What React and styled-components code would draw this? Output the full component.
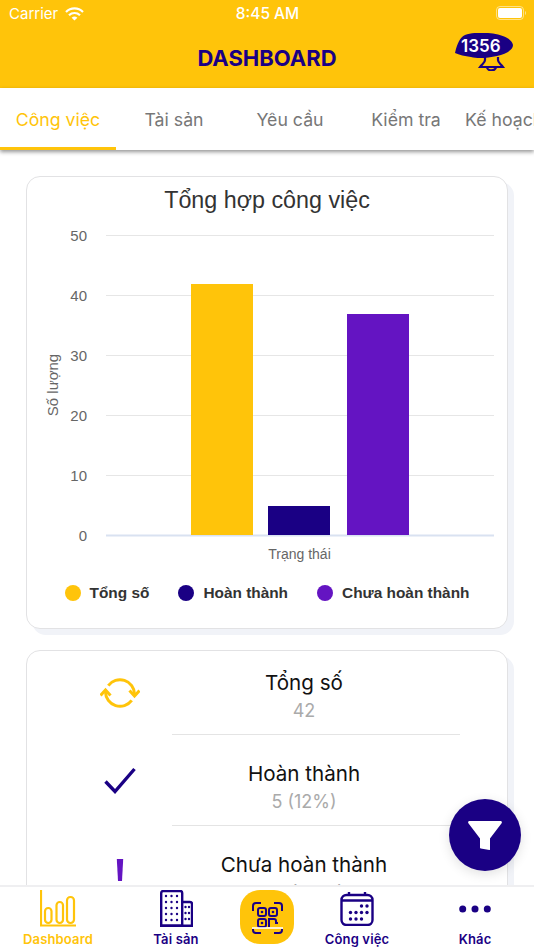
import styled, { createGlobalStyle } from "styled-components";

const YELLOW = "#ffc40a";
const NAVY = "#1a0084";
const PURPLE = "#6414c2";

const GlobalStyle = createGlobalStyle`
  * {
    box-sizing: border-box;
  }
  html, body {
    margin: 0;
    padding: 0;
    background: #fff;
    font-family: "Inter", "Liberation Sans", sans-serif;
  }
`;

const Screen = styled.div`
  position: relative;
  display: flex;
  flex-direction: column;
  width: 534px;
  height: 950px;
  overflow: hidden;
  background: #fff;
`;

const Header = styled.header`
  flex: none;
  height: 88px;
  background: ${YELLOW};
`;

const StatusBar = styled.div`
  display: grid;
  grid-template-columns: 1fr auto 1fr;
  align-items: center;
  height: 28px;
  padding: 0 8px 0 9px;
  color: #fff;
  font-size: 15px;
`;

const Carrier = styled.div`
  display: flex;
  align-items: center;
  gap: 7px;
  margin-top: -1px;
`;

const Clock = styled.div`
  font-size: 15.5px;
  font-weight: 500;
  margin-top: -1px;
`;

const Battery = styled.div`
  justify-self: end;
  display: flex;
  margin-top: -2px;
`;

const NavRow = styled.div`
  display: grid;
  grid-template-columns: 1fr auto 1fr;
  height: 60px;
`;

const Title = styled.h1`
  grid-column: 2;
  margin: -1px 0 0;
  align-self: center;
  color: ${NAVY};
  font-size: 22px;
  font-weight: 700;
  line-height: 60px;
`;

const Bell = styled.div`
  position: relative;
  justify-self: end;
  width: 58px;
  height: 38px;
  margin: 5px 21px 0 0;
`;

const BellCount = styled.span`
  position: absolute;
  top: 3px;
  left: 6px;
  color: #fff;
  font-size: 17px;
  font-weight: 600;
  line-height: 20px;
`;

const Tabs = styled.nav`
  position: relative;
  z-index: 2;
  flex: none;
  display: flex;
  height: 62px;
  background: #fff;
  box-shadow: 0 2px 4px rgba(0, 0, 0, 0.42);
  overflow: hidden;
`;

const Tab = styled.div`
  flex: 0 0 116px;
  display: flex;
  align-items: center;
  justify-content: ${(p) => (p.$clipped ? "flex-start" : "center")};
  height: 62px;
  padding-left: ${(p) => (p.$clipped ? "1px" : "0")};
  padding-top: 3px;
  border-bottom: 3px solid ${(p) => (p.$active ? YELLOW : "transparent")};
  color: ${(p) => (p.$active ? YELLOW : "#777")};
  font-size: 17.7px;
  white-space: nowrap;
`;

const Content = styled.main`
  flex: 1;
  min-height: 0;
  overflow: hidden;
  padding: 26px 26px 0;
`;

const Card = styled.section`
  width: 482px;
  margin-bottom: 21px;
  background: #fff;
  border: 1px solid #e2e2e4;
  border-radius: 14px;
  box-shadow: 6px 6px 0 #f1f3f8;
`;

const ChartTitle = styled.h2`
  margin: 0;
  padding-top: 8px;
  color: #333;
  font-family: "Liberation Sans", sans-serif;
  font-size: 23.3px;
  font-weight: 400;
  line-height: 30px;
  text-align: center;
`;

const ChartSvg = styled.svg`
  display: block;
  margin-top: 10px;
  font-family: "Liberation Sans", sans-serif;
`;

const Legend = styled.div`
  display: flex;
  justify-content: center;
  gap: 29px;
  padding: 19px 0 26px;
`;

const LegendItem = styled.div`
  display: flex;
  align-items: center;
  gap: 9px;
  color: #333;
  font-family: "Liberation Sans", sans-serif;
  font-size: 15.4px;
  font-weight: 700;
  line-height: 18px;
`;

const LegendDot = styled.span`
  width: 16px;
  height: 16px;
  border-radius: 50%;
  background: ${(p) => p.$color};
`;

const Row = styled.div`
  display: flex;
  align-items: stretch;
`;

const RowIcon = styled.div`
  flex: 0 0 145px;
  display: flex;
  align-items: center;
  justify-content: center;
  padding-left: 40px;
  padding-top: ${(p) => p.$drop || 0}px;
`;

const RowBody = styled.div`
  width: 288px;
  padding: 24px 24px 11px 0;
  border-bottom: ${(p) => (p.$last ? "0" : "1px solid #e4e4e4")};
  text-align: center;
  ${Row}:first-child & {
    padding-top: 17px;
  }
`;

const RowTitle = styled.div`
  color: #111;
  font-size: 20.6px;
  line-height: 30px;
`;

const RowValue = styled.div`
  margin-top: 1px;
  color: #aaa;
  font-size: 18px;
  line-height: 24px;
`;

const FilterButton = styled.button`
  position: absolute;
  right: 13px;
  bottom: 79px;
  z-index: 3;
  display: flex;
  align-items: center;
  justify-content: center;
  width: 72px;
  height: 72px;
  padding: 0;
  border: 0;
  border-radius: 50%;
  background: ${NAVY};
  box-shadow: 0 3px 12px rgba(0, 0, 0, 0.12);
`;

const BottomBar = styled.footer`
  position: relative;
  z-index: 2;
  flex: none;
  display: grid;
  grid-template-columns: 116px 120px 62px 118px 118px;
  height: 65px;
  background: #fff;
  border-top: 2px solid #efeff1;
`;

const BarItem = styled.div`
  display: flex;
  flex-direction: column;
  align-items: center;
  color: ${(p) => (p.$active ? YELLOW : NAVY)};
`;

const BarIcon = styled.div`
  display: flex;
  align-items: center;
  justify-content: center;
  height: 37px;
  margin-top: 3px;
`;

const BarLabel = styled.span`
  margin-top: 4px;
  font-size: 13px;
  font-weight: 600;
  letter-spacing: 0.15px;
  line-height: 16px;
`;

const ScanButton = styled.div`
  display: flex;
  align-items: center;
  justify-content: center;
  align-self: start;
  justify-self: center;
  width: 54px;
  height: 54px;
  margin-top: 3px;
  padding-top: 2px;
  border-radius: 20px;
  background: ${YELLOW};
`;

const WifiIcon = () => (
  <svg width="19" height="14" viewBox="0 0 19 14" fill="none" stroke="#fff" strokeWidth="2.2">
    <path d="M1 5a12 12 0 0 1 17 0" />
    <path d="M4 8.2a8 8 0 0 1 11 0" />
    <path d="M9.5 13.5 6.6 10.8a4.2 4.2 0 0 1 5.8 0z" fill="#fff" stroke="none" />
  </svg>
);

const BatteryIcon = () => (
  <svg width="30" height="14" viewBox="0 0 30 14">
    <rect x="0.5" y="0.5" width="27" height="13" rx="3.5" fill="none" stroke="#fff" strokeOpacity="0.5" />
    <rect x="2" y="2" width="24" height="10" rx="2" fill="#fff" />
    <path d="M29 5v4a2 2 0 0 0 1-2 2 2 0 0 0-1-2z" fill="#fff" fillOpacity="0.5" />
  </svg>
);

const BellIcon = () => (
  <svg width="58" height="38" viewBox="0 0 58 38" fill="none">
    <path d="M0 20C2 11 5 4 10 2 18-1 30-.5 38 .5 48 2 57 6 58 12c0 5-7 9-16 11-9 2-19 3-26 1-6-1-12-2-16-4z" fill={NAVY} />
    <g stroke={NAVY} strokeWidth="2.200">
      <path d="M30 24v3c0 3-3 4-5 7h23c-2-3-5-4-5-7v-3" />
      <path d="M32 34a4.500 3.400 0 0 0 9 0" />
    </g>
  </svg>
);

const SyncIcon = () => (
  <svg width="40" height="32" viewBox="0 0 40 32" fill="none" stroke={YELLOW} strokeWidth="3">
    <path d="M8.300 8.600A14.500 14.500 0 0 1 34.500 17" />
    <path d="M31.700 23.400A14.500 14.500 0 0 1 5.500 15" />
    <path d="M29.500 13.500l5 5.500 5-5.500" />
    <path d="M.5 18.500l5-5.500 5 5.500" />
  </svg>
);

const CheckIcon = () => (
  <svg width="32" height="27" viewBox="0 0 32 27" fill="none" stroke={NAVY} strokeWidth="3.400">
    <path d="M1.500 14.500 11 24.500 30.500 2" />
  </svg>
);

const AlertIcon = () => (
  <svg width="8" height="32" viewBox="0 0 8 32" fill={PURPLE}>
    <path d="M.8 0h6.400L6 22H2z" />
    <circle cx="4" cy="29" r="3" />
  </svg>
);

const FunnelIcon = () => (
  <svg width="34" height="29" viewBox="0 0 34 29" fill="#fff">
    <path d="M1.500 0h31c1.200 0 1.800 1.200 1.100 2.200L22 17.500v11c0 .4-.3.5-.6.5L12.800 27.600c-.4-.1-.8-.4-.8-.9v-9.200L.4 2.200C-.3 1.200.3 0 1.500 0z" />
  </svg>
);

const ChartIcon = () => (
  <svg width="36" height="37" viewBox="0 0 36 37" fill="none" stroke={YELLOW} strokeWidth="2.200">
    <path d="M1 0v35.500h35" />
    <rect x="5" y="18" width="6.500" height="15" rx="3.200" />
    <rect x="16.500" y="12" width="6.500" height="21" rx="3.200" />
    <rect x="27" y="7" width="7" height="26" rx="3.400" />
  </svg>
);

const BuildingIcon = () => (
  <svg width="33" height="37" viewBox="0 0 33 37" fill="none" stroke={NAVY} strokeWidth="2.400">
    <path d="M1.200 35.800V3a2 2 0 0 1 2-2h17a2 2 0 0 1 2 2v32.800z" />
    <path d="M22 12h8a2 2 0 0 1 2 2v21.800H1" />
    <g fill={NAVY} stroke="none">
      {[6, 12, 18, 24, 30].map((y) =>
        [6, 11.500, 17].map((x) => <circle key={`${x}-${y}`} cx={x} cy={y} r="1.200" />)
      )}
      {[17, 23, 29].map((y) =>
        [25.500, 29].map((x) => <circle key={`${x}-${y}`} cx={x} cy={y} r="1.200" />)
      )}
    </g>
  </svg>
);

const QrIcon = () => (
  <svg width="31" height="32" viewBox="0 0 31 32" fill="none" stroke={NAVY} strokeWidth="2">
    <path d="M1 9V4a3 3 0 0 1 3-3h5" />
    <path d="M22 1h5a3 3 0 0 1 3 3v5" />
    <path d="M1 27v1a3 3 0 0 0 3 3h5" />
    <path d="M22 31h5a3 3 0 0 0 3-3v-1" />
    <rect x="6" y="6" width="8" height="8" rx="2" />
    <rect x="17" y="6" width="8" height="8" rx="2" />
    <rect x="6" y="17" width="8" height="8" rx="2" />
    <path d="M17 25v-8h5a2 2 0 0 1 2 2v2h2" />
    <circle cx="10" cy="10" r="1.300" fill={NAVY} stroke="none" />
    <circle cx="21" cy="10" r="1.300" fill={NAVY} stroke="none" />
    <circle cx="10" cy="21" r="1.300" fill={NAVY} stroke="none" />
    <path d="M0 26h31" stroke="#fff" strokeWidth="1.600" />
  </svg>
);

const CalendarIcon = () => (
  <svg width="34" height="34" viewBox="0 0 34 34" fill="none" stroke={NAVY} strokeWidth="2.400">
    <rect x="1.500" y="3" width="31" height="30" rx="5" />
    <path d="M1.500 8.500h31M9 0v4M25 0v4" />
    <g fill={NAVY} stroke="none">
      {[
        [21.500, 14],
        [27, 14],
        [10.500, 20.500],
        [16, 20.500],
        [21.500, 20.500],
        [27, 20.500],
        [10.500, 27],
        [16, 27],
        [21.500, 27],
      ].map(([x, y]) => (
        <circle key={`${x}-${y}`} cx={x} cy={y} r="1.700" />
      ))}
    </g>
  </svg>
);

const DotsIcon = () => (
  <svg width="32" height="8" viewBox="0 0 32 8" fill={NAVY}>
    <circle cx="3.700" cy="4" r="3.500" />
    <circle cx="16" cy="4" r="3.500" />
    <circle cx="28.300" cy="4" r="3.500" />
  </svg>
);

const ticks = [50, 40, 30, 20, 10, 0];
const bars = [
  { x: 164, value: 42, color: YELLOW },
  { x: 241, value: 5, color: NAVY },
  { x: 320, value: 37, color: PURPLE },
];
const legend = [
  { label: "Tổng số", color: YELLOW },
  { label: "Hoàn thành", color: NAVY },
  { label: "Chưa hoàn thành", color: PURPLE },
];
const tabs = ["Công việc", "Tài sản", "Yêu cầu", "Kiểm tra", "Kế hoạch"];

// 6px per unit, baseline at y = 310 inside the svg
const tickY = (v) => 310 - v * 6;

const JobChart = () => (
  <ChartSvg width="480" height="340" viewBox="0 0 480 340">
    {ticks.map((t) => (
      <g key={t}>
        <line
          x1="79"
          x2="467"
          y1={tickY(t) + 0.5}
          y2={tickY(t) + 0.5}
          stroke={t === 0 ? "#d9e2f1" : "#e6e6e6"}
          strokeWidth={t === 0 ? 2 : 1}
        />
        <text x="60" y={tickY(t) + 6} textAnchor="end" fontSize="15" fill="#666">
          {t}
        </text>
      </g>
    ))}
    {bars.map((b) => (
      <rect key={b.x} x={b.x} y={tickY(b.value) + 1} width="62" height={b.value * 6 - 1} fill={b.color} />
    ))}
    <text x="272.500" y="334" textAnchor="middle" fontSize="14" fill="#666">
      Trạng thái
    </text>
    <text transform="translate(31 160) rotate(-90)" textAnchor="middle" fontSize="15" fill="#666">
      Số lượng
    </text>
  </ChartSvg>
);

const App = () => {
  return (
    <Screen>
      <GlobalStyle />
      <Header>
        <StatusBar>
          <Carrier>
            Carrier
            <WifiIcon />
          </Carrier>
          <Clock>8:45 AM</Clock>
          <Battery>
            <BatteryIcon />
          </Battery>
        </StatusBar>
        <NavRow>
          <Title>DASHBOARD</Title>
          <Bell>
            <BellIcon />
            <BellCount>1356</BellCount>
          </Bell>
        </NavRow>
      </Header>

      <Tabs>
        {tabs.map((t, i) => (
          <Tab key={t} $active={i === 0} $clipped={i === 4}>
            {t}
          </Tab>
        ))}
      </Tabs>

      <Content>
        <Card>
          <ChartTitle>Tổng hợp công việc</ChartTitle>
          <JobChart />
          <Legend>
            {legend.map((l) => (
              <LegendItem key={l.label}>
                <LegendDot $color={l.color} />
                {l.label}
              </LegendItem>
            ))}
          </Legend>
        </Card>

        <Card>
          <Row>
            <RowIcon>
              <SyncIcon />
            </RowIcon>
            <RowBody>
              <RowTitle>Tổng số</RowTitle>
              <RowValue>42</RowValue>
            </RowBody>
          </Row>
          <Row>
            <RowIcon>
              <CheckIcon />
            </RowIcon>
            <RowBody>
              <RowTitle>Hoàn thành</RowTitle>
              <RowValue>5 (12%)</RowValue>
            </RowBody>
          </Row>
          <Row>
            <RowIcon $drop={8}>
              <AlertIcon />
            </RowIcon>
            <RowBody $last>
              <RowTitle>Chưa hoàn thành</RowTitle>
              <RowValue>37 (88%)</RowValue>
            </RowBody>
          </Row>
        </Card>
      </Content>

      <FilterButton>
        <FunnelIcon />
      </FilterButton>

      <BottomBar>
        <BarItem $active>
          <BarIcon>
            <ChartIcon />
          </BarIcon>
          <BarLabel>Dashboard</BarLabel>
        </BarItem>
        <BarItem>
          <BarIcon>
            <BuildingIcon />
          </BarIcon>
          <BarLabel>Tài sản</BarLabel>
        </BarItem>
        <ScanButton>
          <QrIcon />
        </ScanButton>
        <BarItem>
          <BarIcon>
            <CalendarIcon />
          </BarIcon>
          <BarLabel>Công việc</BarLabel>
        </BarItem>
        <BarItem>
          <BarIcon>
            <DotsIcon />
          </BarIcon>
          <BarLabel>Khác</BarLabel>
        </BarItem>
      </BottomBar>
    </Screen>
  );
};

export default App;
